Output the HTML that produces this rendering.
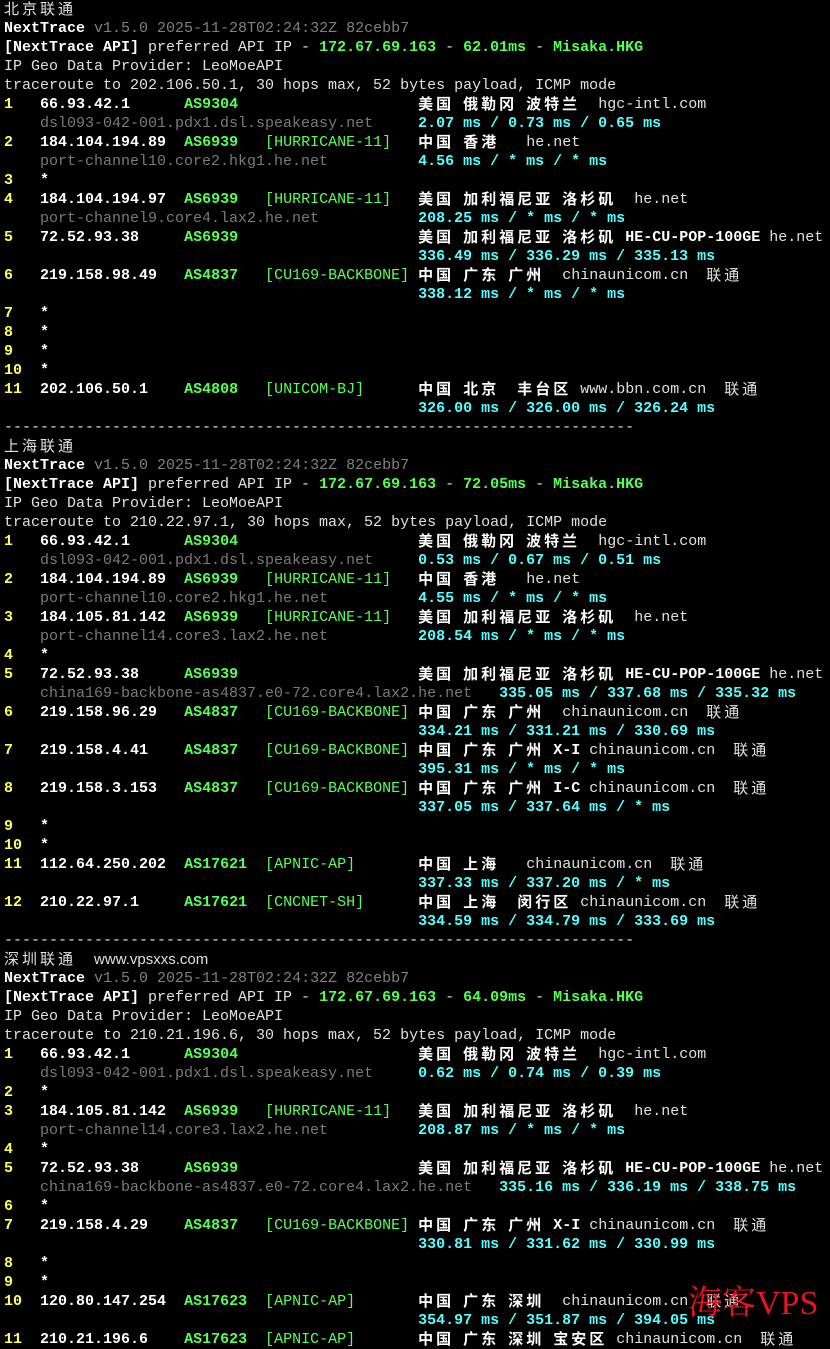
<!DOCTYPE html>
<html><head><meta charset="utf-8"><style>
html,body{margin:0;padding:0;background:#000;}
body{width:830px;height:1336px;overflow:hidden;position:relative;}
pre{margin:0;padding:0 0 0 4px;font-family:"Liberation Mono",monospace;font-size:15px;line-height:19px;color:#e0e0e0;white-space:pre;}
.k{font-family:"Noto Sans CJK SC",sans-serif;letter-spacing:3px;display:inline-block;height:19px;line-height:17px;vertical-align:top;overflow:hidden;}
b{font-weight:bold;}
.W{color:#fff;font-weight:bold;}
.Y{color:#ffff55;font-weight:bold;}
.G{color:#55ff55;font-weight:bold;}
.T{color:#55ff55;}
.H{color:#7a7a7a;}
.C{color:#55ffff;font-weight:bold;}
.V{color:#808080;}
.F{font-family:"Liberation Sans",sans-serif;font-size:15px;display:inline-block;height:19px;line-height:19px;vertical-align:top;}
#wm{position:absolute;left:688px;top:1284px;font-family:"Liberation Serif","Noto Serif CJK SC",serif;font-size:34px;color:#e8141e;line-height:40px;}
</style></head><body>
<pre><span class="k">北京联通</span>
<span class="W">NextTrace</span> <span class="V">v1.5.0 2025-11-28T02:24:32Z 82cebb7</span>
<span class="W">[NextTrace API]</span> preferred API IP - <span class="G">172.67.69.163</span> - <span class="G">62.01ms</span> - <span class="G">Misaka.HKG</span>
IP Geo Data Provider: LeoMoeAPI
traceroute to 202.106.50.1, 30 hops max, 52 bytes payload, ICMP mode
<span class="Y">1</span>   <span class="W">66.93.42.1</span>      <span class="G">AS9304</span>                    <b class="k W">美国</b> <b class="k W">俄勒冈</b> <b class="k W">波特兰</b>  hgc-intl.com
    <span class="H">dsl093-042-001.pdx1.dsl.speakeasy.net</span>     <span class="C">2.07 ms / 0.73 ms / 0.65 ms</span>
<span class="Y">2</span>   <span class="W">184.104.194.89</span>  <span class="G">AS6939</span>   <span class="T">[HURRICANE-11]</span>   <b class="k W">中国</b> <b class="k W">香港</b>   he.net
    <span class="H">port-channel10.core2.hkg1.he.net</span>          <span class="C">4.56 ms / * ms / * ms</span>
<span class="Y">3</span>   <span class="W">*</span>
<span class="Y">4</span>   <span class="W">184.104.194.97</span>  <span class="G">AS6939</span>   <span class="T">[HURRICANE-11]</span>   <b class="k W">美国</b> <b class="k W">加利福尼亚</b> <b class="k W">洛杉矶</b>  he.net
    <span class="H">port-channel9.core4.lax2.he.net</span>           <span class="C">208.25 ms / * ms / * ms</span>
<span class="Y">5</span>   <span class="W">72.52.93.38</span>     <span class="G">AS6939</span>                    <b class="k W">美国</b> <b class="k W">加利福尼亚</b> <b class="k W">洛杉矶</b> <b class="W">HE-CU-POP-100GE</b> he.net
                                              <span class="C">336.49 ms / 336.29 ms / 335.13 ms</span>
<span class="Y">6</span>   <span class="W">219.158.98.49</span>   <span class="G">AS4837</span>   <span class="T">[CU169-BACKBONE]</span> <b class="k W">中国</b> <b class="k W">广东</b> <b class="k W">广州</b>  chinaunicom.cn  <span class="k">联通</span>
                                              <span class="C">338.12 ms / * ms / * ms</span>
<span class="Y">7</span>   <span class="W">*</span>
<span class="Y">8</span>   <span class="W">*</span>
<span class="Y">9</span>   <span class="W">*</span>
<span class="Y">10</span>  <span class="W">*</span>
<span class="Y">11</span>  <span class="W">202.106.50.1</span>    <span class="G">AS4808</span>   <span class="T">[UNICOM-BJ]</span>      <b class="k W">中国</b> <b class="k W">北京</b>  <b class="k W">丰台区</b> www.bbn.com.cn  <span class="k">联通</span>
                                              <span class="C">326.00 ms / 326.00 ms / 326.24 ms</span>
----------------------------------------------------------------------
<span class="k">上海联通</span>
<span class="W">NextTrace</span> <span class="V">v1.5.0 2025-11-28T02:24:32Z 82cebb7</span>
<span class="W">[NextTrace API]</span> preferred API IP - <span class="G">172.67.69.163</span> - <span class="G">72.05ms</span> - <span class="G">Misaka.HKG</span>
IP Geo Data Provider: LeoMoeAPI
traceroute to 210.22.97.1, 30 hops max, 52 bytes payload, ICMP mode
<span class="Y">1</span>   <span class="W">66.93.42.1</span>      <span class="G">AS9304</span>                    <b class="k W">美国</b> <b class="k W">俄勒冈</b> <b class="k W">波特兰</b>  hgc-intl.com
    <span class="H">dsl093-042-001.pdx1.dsl.speakeasy.net</span>     <span class="C">0.53 ms / 0.67 ms / 0.51 ms</span>
<span class="Y">2</span>   <span class="W">184.104.194.89</span>  <span class="G">AS6939</span>   <span class="T">[HURRICANE-11]</span>   <b class="k W">中国</b> <b class="k W">香港</b>   he.net
    <span class="H">port-channel10.core2.hkg1.he.net</span>          <span class="C">4.55 ms / * ms / * ms</span>
<span class="Y">3</span>   <span class="W">184.105.81.142</span>  <span class="G">AS6939</span>   <span class="T">[HURRICANE-11]</span>   <b class="k W">美国</b> <b class="k W">加利福尼亚</b> <b class="k W">洛杉矶</b>  he.net
    <span class="H">port-channel14.core3.lax2.he.net</span>          <span class="C">208.54 ms / * ms / * ms</span>
<span class="Y">4</span>   <span class="W">*</span>
<span class="Y">5</span>   <span class="W">72.52.93.38</span>     <span class="G">AS6939</span>                    <b class="k W">美国</b> <b class="k W">加利福尼亚</b> <b class="k W">洛杉矶</b> <b class="W">HE-CU-POP-100GE</b> he.net
    <span class="H">china169-backbone-as4837.e0-72.core4.lax2.he.net</span>   <span class="C">335.05 ms / 337.68 ms / 335.32 ms</span>
<span class="Y">6</span>   <span class="W">219.158.96.29</span>   <span class="G">AS4837</span>   <span class="T">[CU169-BACKBONE]</span> <b class="k W">中国</b> <b class="k W">广东</b> <b class="k W">广州</b>  chinaunicom.cn  <span class="k">联通</span>
                                              <span class="C">334.21 ms / 331.21 ms / 330.69 ms</span>
<span class="Y">7</span>   <span class="W">219.158.4.41</span>    <span class="G">AS4837</span>   <span class="T">[CU169-BACKBONE]</span> <b class="k W">中国</b> <b class="k W">广东</b> <b class="k W">广州</b> <b class="W">X-I</b> chinaunicom.cn  <span class="k">联通</span>
                                              <span class="C">395.31 ms / * ms / * ms</span>
<span class="Y">8</span>   <span class="W">219.158.3.153</span>   <span class="G">AS4837</span>   <span class="T">[CU169-BACKBONE]</span> <b class="k W">中国</b> <b class="k W">广东</b> <b class="k W">广州</b> <b class="W">I-C</b> chinaunicom.cn  <span class="k">联通</span>
                                              <span class="C">337.05 ms / 337.64 ms / * ms</span>
<span class="Y">9</span>   <span class="W">*</span>
<span class="Y">10</span>  <span class="W">*</span>
<span class="Y">11</span>  <span class="W">112.64.250.202</span>  <span class="G">AS17621</span>  <span class="T">[APNIC-AP]</span>       <b class="k W">中国</b> <b class="k W">上海</b>   chinaunicom.cn  <span class="k">联通</span>
                                              <span class="C">337.33 ms / 337.20 ms / * ms</span>
<span class="Y">12</span>  <span class="W">210.22.97.1</span>     <span class="G">AS17621</span>  <span class="T">[CNCNET-SH]</span>      <b class="k W">中国</b> <b class="k W">上海</b>  <b class="k W">闵行区</b> chinaunicom.cn  <span class="k">联通</span>
                                              <span class="C">334.59 ms / 334.79 ms / 333.69 ms</span>
----------------------------------------------------------------------
<span class="k">深圳联通</span>  <span class="F">www.vpsxxs.com</span>
<span class="W">NextTrace</span> <span class="V">v1.5.0 2025-11-28T02:24:32Z 82cebb7</span>
<span class="W">[NextTrace API]</span> preferred API IP - <span class="G">172.67.69.163</span> - <span class="G">64.09ms</span> - <span class="G">Misaka.HKG</span>
IP Geo Data Provider: LeoMoeAPI
traceroute to 210.21.196.6, 30 hops max, 52 bytes payload, ICMP mode
<span class="Y">1</span>   <span class="W">66.93.42.1</span>      <span class="G">AS9304</span>                    <b class="k W">美国</b> <b class="k W">俄勒冈</b> <b class="k W">波特兰</b>  hgc-intl.com
    <span class="H">dsl093-042-001.pdx1.dsl.speakeasy.net</span>     <span class="C">0.62 ms / 0.74 ms / 0.39 ms</span>
<span class="Y">2</span>   <span class="W">*</span>
<span class="Y">3</span>   <span class="W">184.105.81.142</span>  <span class="G">AS6939</span>   <span class="T">[HURRICANE-11]</span>   <b class="k W">美国</b> <b class="k W">加利福尼亚</b> <b class="k W">洛杉矶</b>  he.net
    <span class="H">port-channel14.core3.lax2.he.net</span>          <span class="C">208.87 ms / * ms / * ms</span>
<span class="Y">4</span>   <span class="W">*</span>
<span class="Y">5</span>   <span class="W">72.52.93.38</span>     <span class="G">AS6939</span>                    <b class="k W">美国</b> <b class="k W">加利福尼亚</b> <b class="k W">洛杉矶</b> <b class="W">HE-CU-POP-100GE</b> he.net
    <span class="H">china169-backbone-as4837.e0-72.core4.lax2.he.net</span>   <span class="C">335.16 ms / 336.19 ms / 338.75 ms</span>
<span class="Y">6</span>   <span class="W">*</span>
<span class="Y">7</span>   <span class="W">219.158.4.29</span>    <span class="G">AS4837</span>   <span class="T">[CU169-BACKBONE]</span> <b class="k W">中国</b> <b class="k W">广东</b> <b class="k W">广州</b> <b class="W">X-I</b> chinaunicom.cn  <span class="k">联通</span>
                                              <span class="C">330.81 ms / 331.62 ms / 330.99 ms</span>
<span class="Y">8</span>   <span class="W">*</span>
<span class="Y">9</span>   <span class="W">*</span>
<span class="Y">10</span>  <span class="W">120.80.147.254</span>  <span class="G">AS17623</span>  <span class="T">[APNIC-AP]</span>       <b class="k W">中国</b> <b class="k W">广东</b> <b class="k W">深圳</b>  chinaunicom.cn  <span class="k">联通</span>
                                              <span class="C">354.97 ms / 351.87 ms / 394.05 ms</span>
<span class="Y">11</span>  <span class="W">210.21.196.6</span>    <span class="G">AS17623</span>  <span class="T">[APNIC-AP]</span>       <b class="k W">中国</b> <b class="k W">广东</b> <b class="k W">深圳</b> <b class="k W">宝安区</b> chinaunicom.cn  <span class="k">联通</span>
</pre>
<div id="wm">海客VPS</div>
</body></html>
